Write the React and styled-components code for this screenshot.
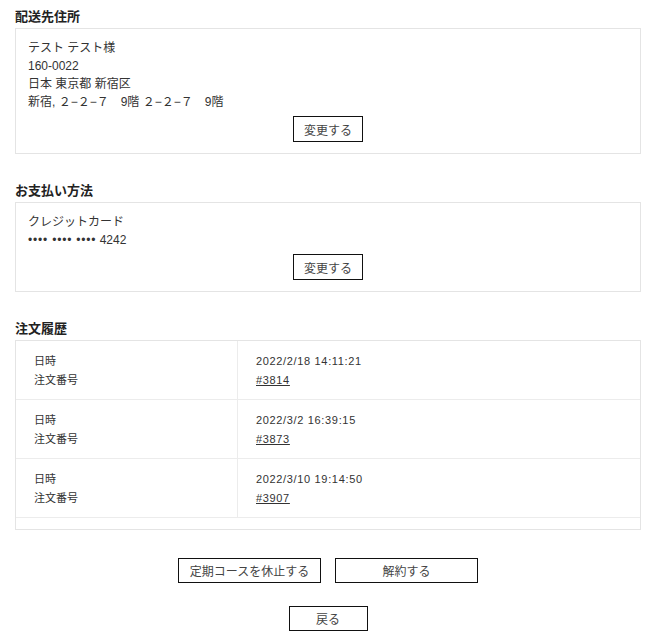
import React from 'react'
import styled, { createGlobalStyle } from 'styled-components'

const GlobalStyle = createGlobalStyle`
  body{
    margin: 0;
    background: #fff;
    font-family: "Liberation Sans", "Noto Sans CJK JP", sans-serif;
    color: #333;
  }
`

const orders = [
  { date: '2022/2/18 14:11:21', no: '#3814' },
  { date: '2022/3/2 16:39:15', no: '#3873' },
  { date: '2022/3/10 19:14:50', no: '#3907' },
]

function App() {
  return (
    <Page>
      <GlobalStyle />
      <Section>
        <Heading>配送先住所</Heading>
        <Box>
          <Line>テスト テスト様</Line>
          <Line>160-0022</Line>
          <Line>日本 東京都 新宿区</Line>
          <Line>新宿, ２−２−７　9階 ２−２−７　9階</Line>
          <Center>
            <Button $w={70} $h={26}>変更する</Button>
          </Center>
        </Box>
      </Section>

      <Section>
        <Heading>お支払い方法</Heading>
        <Box>
          <Line>クレジットカード</Line>
          <Line><Dots>•••• •••• ••••</Dots> 4242</Line>
          <Center>
            <Button $w={70} $h={26}>変更する</Button>
          </Center>
        </Box>
      </Section>

      <Section>
        <Heading>注文履歴</Heading>
        <TableBox>
          {orders.map((o) => (
            <Row key={o.no}>
              <Cell $left>
                <div>日時</div>
                <div>注文番号</div>
              </Cell>
              <Cell>
                <div>{o.date}</div>
                <OrderLink href="#">{o.no}</OrderLink>
              </Cell>
            </Row>
          ))}
        </TableBox>
      </Section>

      <Actions>
        <ButtonRow>
          <Button $w={143} $h={25}>定期コースを休止する</Button>
          <Button $w={143} $h={25}>解約する</Button>
        </ButtonRow>
        <Button $w={79} $h={25}>戻る</Button>
      </Actions>
    </Page>
  )
}

export default App

const Page = styled.div`
  padding: 8px 16px 10px 15px;
`

const Section = styled.section`
  margin-bottom: 28px;
`

const Heading = styled.h2`
  margin: 0 0 2px;
  font-size: 13px;
  line-height: 18px;
  font-weight: 700;
  color: #222;
`

const Box = styled.div`
  border: 1px solid #e4e4e4;
  padding: 10px 12px 11px;
`

const Line = styled.div`
  font-size: 12px;
  line-height: 18px;
`

const Dots = styled.span`
  letter-spacing: 0.8px;
`

const Center = styled.div`
  display: flex;
  justify-content: center;
  margin-top: 5px;
`

const Button = styled.button`
  display: block;
  width: ${(p) => p.$w}px;
  height: ${(p) => p.$h}px;
  padding: 0;
  background: #fff;
  border: 1px solid #111;
  border-radius: 0;
  font-family: inherit;
  font-size: 12px;
  color: #444;
  cursor: pointer;
`

const TableBox = styled.div`
  border: 1px solid #e4e4e4;
  padding-bottom: 11px;
`

const Row = styled.div`
  display: grid;
  grid-template-columns: 222px 1fr;
  border-bottom: 1px solid #ececec;
`

const Cell = styled.div`
  padding: 11px 17px 9px 18px;
  font-size: 11px;
  line-height: 19px;
  letter-spacing: ${(p) => (p.$left ? '0' : '0.06em')};
  border-right: ${(p) => (p.$left ? '1px solid #ececec' : 'none')};
`

const OrderLink = styled.a`
  color: #333;
  text-decoration: underline;
`

const Actions = styled.div`
  display: flex;
  flex-direction: column;
  align-items: center;
  gap: 23px;
`

const ButtonRow = styled.div`
  display: flex;
  gap: 14px;
`
